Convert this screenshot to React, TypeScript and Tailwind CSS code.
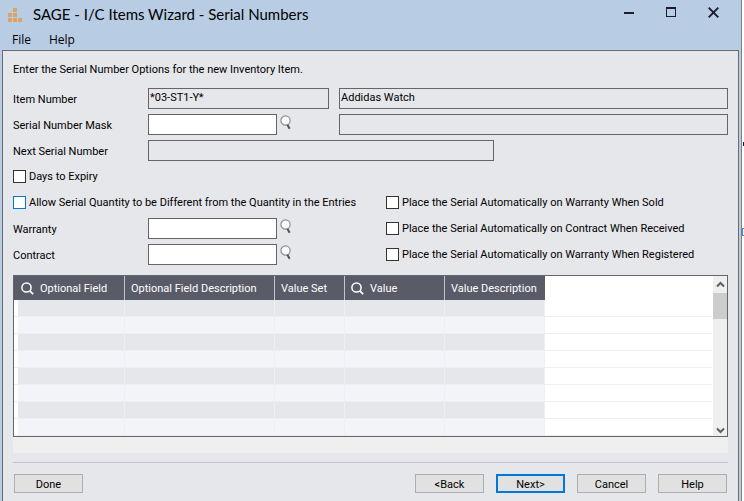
import type { ReactNode } from "react";

function FinderButton({ label }: { label: string }) {
  return (
    <button type="button" aria-label={label} className="mb-[2px] ml-[3px] h-4 w-3">
      <svg viewBox="0 0 12 16" className="block h-4 w-3" fill="none">
        <circle cx="5.5" cy="5.5" r="4.6" fill="#fbfbfd" stroke="#8e9098" strokeWidth="1.2" />
        <path d="M7.4 9.8 L9.6 13.8" stroke="#50525a" strokeWidth="2" />
      </svg>
    </button>
  );
}

function SearchGlyph() {
  return (
    <svg viewBox="0 0 13 13" className="h-[13px] w-[13px] shrink-0" fill="none" stroke="#ffffff">
      <circle cx="5.5" cy="5.5" r="4.6" strokeWidth="1.5" />
      <path d="M8.8 8.8 L12.2 12.2" strokeWidth="1.7" />
    </svg>
  );
}

function Row({ children }: { children: ReactNode }) {
  return <div className="flex h-[26px] items-center">{children}</div>;
}

function FieldLabel({ id, children }: { id: string; children: ReactNode }) {
  return (
    <label htmlFor={id} className="w-[135px] shrink-0 pt-1">
      {children}
    </label>
  );
}

const box = "block h-[21px] rounded-none border border-[#646569] px-px pb-[2px] text-[11px] leading-4 outline-none";

function Check({ id, label, focused }: { id: string; label: string; focused?: boolean }) {
  return (
    <div className="flex items-center gap-[3px]">
      <input
        id={id}
        type="checkbox"
        className={
          "h-[13px] w-[13px] shrink-0 appearance-none border bg-white " +
          (focused ? "border-[#0078d7]" : "border-[#333333]")
        }
      />
      <label htmlFor={id} className="pt-[2px] whitespace-nowrap">
        {label}
      </label>
    </div>
  );
}

function PushButton({ children, primary }: { children: ReactNode; primary?: boolean }) {
  return (
    <button
      type="button"
      className={
        "flex h-[19px] w-[69px] items-center justify-center bg-[#e1e1e1] pt-[2px] " +
        (primary ? "border-2 border-[#0078d7]" : "border border-[#adadad]")
      }
    >
      {children}
    </button>
  );
}

const columns = [
  { title: "Optional Field", search: true },
  { title: "Optional Field Description", search: false },
  { title: "Value Set", search: false },
  { title: "Value", search: true },
  { title: "Value Description", search: false },
];

const rows = [0, 1, 2, 3, 4, 5, 6, 7];

export default function App() {
  return (
    <div className="flex min-h-screen bg-white font-[Roboto,'Liberation_Sans',sans-serif] text-[11px] leading-4 text-black">
      <div className="flex min-w-0 flex-1 flex-col border-r border-[#7f8084] bg-[#b8cce4] pr-[2px] pl-[2px]">
        <header className="flex h-[30px] items-center pl-[6px]">
          <svg viewBox="0 0 14 14" className="h-[14px] w-[14px]" fill="#d9a566">
            <path d="M5 0h4v4H5zM0 5h4v4H0zM5 5h4v4H5zM0 10h4v4H0zM5 10h4v4H5zM10 10h4v4h-4z" />
          </svg>
          <h1 className="ml-[11px] flex-1 pb-[2px] font-[Lato,sans-serif] text-[15px] leading-5 whitespace-nowrap">
            SAGE - I/C Items Wizard - Serial Numbers
          </h1>
          <div className="flex items-center gap-8 pr-5 pb-[6px]">
            <button type="button" aria-label="Minimize">
              <svg viewBox="0 0 10 10" className="h-[10px] w-[10px]">
                <path d="M0 5h10v2H0z" fill="#1b1d2b" />
              </svg>
            </button>
            <button type="button" aria-label="Maximize">
              <svg viewBox="0 0 10 10" className="h-[10px] w-[10px]">
                <path d="M0 0h10v10H0zM1 2v7h8V2z" fillRule="evenodd" fill="#1b1d2b" />
              </svg>
            </button>
            <button type="button" aria-label="Close">
              <svg viewBox="0 0 11 11" className="h-[11px] w-[11px]">
                <path d="M.7 .7 L10.3 10.3 M10.3 .7 L.7 10.3" stroke="#1b1d2b" strokeWidth="1.9" />
              </svg>
            </button>
          </div>
        </header>
        <nav className="flex h-5 gap-[18px] pl-[10px] font-['Open_Sans','Noto_Sans',sans-serif] text-[12px] leading-5">
          <button type="button">File</button>
          <button type="button">Help</button>
        </nav>

        <main className="flex flex-1 flex-col border-x border-t border-[#6b6c70] bg-[#e6e7eb] px-[10px] pt-[11px] pb-2">
          <p className="mb-[7px]">Enter the Serial Number Options for the new Inventory Item.</p>
          <Row>
            <FieldLabel id="item">Item Number</FieldLabel>
            <input id="item" readOnly defaultValue="*03-ST1-Y*" className={box + " mr-[10px] w-[181px]"} />
            <input aria-label="Item description" readOnly defaultValue="Addidas Watch" className={box + " min-w-0 flex-1"} />
          </Row>
          <Row>
            <FieldLabel id="mask">Serial Number Mask</FieldLabel>
            <div className="mr-[10px] flex w-[181px] items-center">
              <input id="mask" className={box + " w-[129px] bg-white"} />
              <FinderButton label="Find serial number mask" />
            </div>
            <input aria-label="Mask description" readOnly className={box + " min-w-0 flex-1"} />
          </Row>
          <Row>
            <FieldLabel id="next">Next Serial Number</FieldLabel>
            <input id="next" readOnly className={box + " w-[346px]"} />
          </Row>
          <Row>
            <Check id="expiry" label="Days to Expiry" />
          </Row>
          <div className="flex">
            <div className="w-[373px] shrink-0">
              <Row>
                <Check id="allow" label="Allow Serial Quantity to be Different from the Quantity in the Entries" focused />
              </Row>
              <Row>
                <FieldLabel id="warranty">Warranty</FieldLabel>
                <input id="warranty" className={box + " w-[129px] bg-white"} />
                <FinderButton label="Find warranty" />
              </Row>
              <Row>
                <FieldLabel id="contract">Contract</FieldLabel>
                <input id="contract" className={box + " w-[129px] bg-white"} />
                <FinderButton label="Find contract" />
              </Row>
            </div>
            <div>
              <Row>
                <Check id="sold" label="Place the Serial Automatically on Warranty When Sold" />
              </Row>
              <Row>
                <Check id="received" label="Place the Serial Automatically on Contract When Received" />
              </Row>
              <Row>
                <Check id="registered" label="Place the Serial Automatically on Warranty When Registered" />
              </Row>
            </div>
          </div>

          <section className="mt-2 flex border border-[#646569] bg-white">
            <table className="mr-px w-full min-w-0 flex-1 table-fixed border-separate border-spacing-0">
              <colgroup>
                <col className="w-[4px]" />
                <col className="w-[107px]" />
                <col className="w-[150px]" />
                <col className="w-[70px]" />
                <col className="w-[100px]" />
                <col className="w-[100px]" />
                <col />
              </colgroup>
              <thead>
                <tr className="h-6 text-left text-white">
                  <td className="bg-[#595c68] p-0" />
                  {columns.map((c, i) => (
                    <th
                      key={c.title}
                      scope="col"
                      className={
                        "bg-[#595c68] pt-px pr-0 pb-0 font-normal whitespace-nowrap " +
                        (i < 4 ? "border-r border-[#c3c5cc] " : "") +
                        (i === 0 ? "pl-[3px]" : "pl-[6px]")
                      }
                    >
                      <span className="flex items-center gap-[6px]">
                        {c.search && <SearchGlyph />}
                        {c.title}
                      </span>
                    </th>
                  ))}
                  <td className="p-0" />
                </tr>
              </thead>
              <tbody>
                {rows.map((r) => (
                  <tr key={r} className="h-[17px]">
                    <td className="border-b border-[#efefef] p-0" />
                    {columns.map((c) => (
                      <td
                        key={c.title}
                        className={
                          "border-r border-b border-[#efefef] p-0 " + (r % 2 === 0 ? "bg-[#e6e7eb]" : "bg-[#f3f4f9]")
                        }
                      />
                    ))}
                    <td className="border-b border-[#efefef] p-0" />
                  </tr>
                ))}
              </tbody>
            </table>
            <div className="flex w-[14px] shrink-0 flex-col items-center bg-[#efefef]">
              <button type="button" aria-label="Scroll up" className="flex h-[17px] w-full items-center justify-center">
                <svg viewBox="0 0 9 7" className="h-[7px] w-[9px]" fill="none" stroke="#606060" strokeWidth="2">
                  <path d="M1 5.5 L4.5 2 L8 5.5" />
                </svg>
              </button>
              <div className="h-[26px] w-full bg-[#cdcdcd]" />
              <button type="button" aria-label="Scroll down" className="mt-auto flex h-3 w-full items-center justify-center">
                <svg viewBox="0 0 9 7" className="h-[7px] w-[9px]" fill="none" stroke="#606060" strokeWidth="2">
                  <path d="M1 1.5 L4.5 5 L8 1.5" />
                </svg>
              </button>
            </div>
          </section>
          <div className="h-4 bg-[#efefef]" />
          <hr className="mt-[9px] border-[#c3c5cf]" />
          <footer className="mt-[11px] flex gap-3 px-px">
            <PushButton>Done</PushButton>
            <div className="flex-1" />
            <PushButton>&lt;Back</PushButton>
            <PushButton primary>Next&gt;</PushButton>
            <PushButton>Cancel</PushButton>
            <PushButton>Help</PushButton>
          </footer>
        </main>
      </div>
      <div className="flex w-[2px] shrink-0 flex-col overflow-hidden bg-white">
        <div className="mt-[142px] h-1 w-px self-end bg-[#2b1b1b]" />
        <div className="mt-[82px] h-2 w-[2px] border-y border-l border-[#4a7fc4]" />
      </div>
    </div>
  );
}
